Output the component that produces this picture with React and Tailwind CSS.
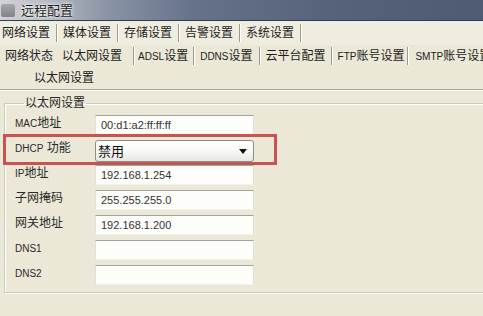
import React from "react";

const FONT = "font-['Liberation_Sans','Noto_Sans_CJK_SC',sans-serif]";

function Sep({ className = "" }) {
  return (
    <div
      className={
        "w-[2px] h-[18px] shrink-0 border-l border-l-[#9e9b8a] border-r border-r-white " +
        className
      }
    />
  );
}

function L({ children }) {
  return <span className="text-[10px]">{children}</span>;
}

function Input({ value }) {
  return (
    <div className="w-[159px] h-[20px] bg-[#fdfdfa] border-t border-t-[#a3a3a0] border-l border-l-[#e2e1d8] border-r border-r-[#e2e1d8] border-b border-b-[#f3f2ea] flex items-center pl-[5px] text-[11px] text-[#333]">
      {value}
    </div>
  );
}

function Row({ label, children }) {
  return (
    <div className="h-[25px] flex items-start">
      <div className="w-[80px] h-[20px] flex items-center text-[12px] text-[#2a2a2a] -mt-[2px]">
        {label}
      </div>
      {children}
    </div>
  );
}

export default function App() {
  const row1 = ["网络设置", "媒体设置", "存储设置", "告警设置", "系统设置"];
  return (
    <div
      className={
        "w-[483px] h-[316px] overflow-hidden bg-[#ebe8d7] text-[#1e1e1e] " + FONT
      }
    >
      {/* title bar */}
      <div className="h-[21px] flex items-center bg-[linear-gradient(90deg,#d2d3d6_0%,#b6bac2_10%,#8a94a6_22%,#66728a_40%,#56627a_70%,#4f5b72_100%)] border-b border-b-[#323d50]">
        <div className="w-[14px] h-[13px] ml-[1px] rounded-[2px] bg-[linear-gradient(180deg,#9a9ca2,#6c7078)] opacity-80" />
        <span className="ml-[6px] text-[13px] leading-none text-[#1c1c1c] [text-shadow:0_0_4px_#ffffff,0_0_2px_#ffffff]">
          远程配置
        </span>
      </div>

      {/* tab row 1 */}
      <div className="h-[24px] flex items-center pl-[2px] bg-[#efede0]">
        {row1.map((t) => (
          <React.Fragment key={t}>
            <span className="text-[12px] leading-none whitespace-nowrap">{t}</span>
            <Sep className="ml-[6px] mr-[5px]" />
          </React.Fragment>
        ))}
      </div>

      {/* tab row 2 */}
      <div className="h-[22px] flex items-center pl-[5px] text-[12px] leading-none whitespace-nowrap">
        <span>网络状态</span>
        <span className="ml-[9px]">以太网设置</span>
        <Sep className="ml-[11px]" />
        <span className="ml-[3px]">
          <L>ADSL</L>设置
        </span>
        <Sep className="ml-[5px]" />
        <span className="ml-[5px]">
          <L>DDNS</L>设置
        </span>
        <Sep className="ml-[6px]" />
        <span className="ml-[5px]">云平台配置</span>
        <Sep className="ml-[5px]" />
        <span className="ml-[5px]">
          <L>FTP</L>账号设置
        </span>
        <Sep className="ml-[3px]" />
        <span className="ml-[6px]">
          <L>SMTP</L>账号设置
        </span>
      </div>

      {/* tab row 3 */}
      <div className="h-[22px] flex items-center pl-[34px] text-[12px] leading-none">
        以太网设置
      </div>

      <div className="h-[2px] border-t border-t-[#a9a592] border-b border-b-white" />

      <fieldset className="mt-[5px] ml-[4px] w-[500px] border border-[#cfcbb9] shadow-[inset_1px_1px_0_#ffffff,1px_1px_0_#ffffff] pl-[10px] pb-[2px]">
        <legend className="ml-[9px] px-[1px] text-[12px] leading-[14px] text-[#2a2a2a]">
          以太网设置
        </legend>
        <div className="pt-[5px]">
          <Row label={<><L>MAC</L>地址</>}>
            <Input value="00:d1:a2:ff:ff:ff" />
          </Row>
          <div className="relative">
            <Row label={<><L>DHCP</L>&nbsp;功能</>}>
              <div className="w-[159px] h-[22px] rounded-[3px] border border-[#8d8d8a] bg-[linear-gradient(180deg,#ffffff_0%,#f7f7f5_55%,#e6e6e2_100%)] flex items-center justify-between pl-[2px] pr-[6px]">
                <span className="text-[13px] leading-none text-[#111]">禁用</span>
                <svg width="8" height="5" viewBox="0 0 8 5">
                  <path d="M0 0 L8 0 L4 5 Z" fill="#111" />
                </svg>
              </div>
            </Row>
            <div className="absolute -left-[12px] -top-[6px] w-[274px] h-[31px] border-[3px] border-[#c9534f] pointer-events-none" />
          </div>
          <Row label={<><L>IP</L>地址</>}>
            <Input value="192.168.1.254" />
          </Row>
          <Row label="子网掩码">
            <Input value="255.255.255.0" />
          </Row>
          <Row label="网关地址">
            <Input value="192.168.1.200" />
          </Row>
          <Row label={<L>DNS1</L>}>
            <Input value="" />
          </Row>
          <Row label={<L>DNS2</L>}>
            <Input value="" />
          </Row>
        </div>
      </fieldset>
    </div>
  );
}
